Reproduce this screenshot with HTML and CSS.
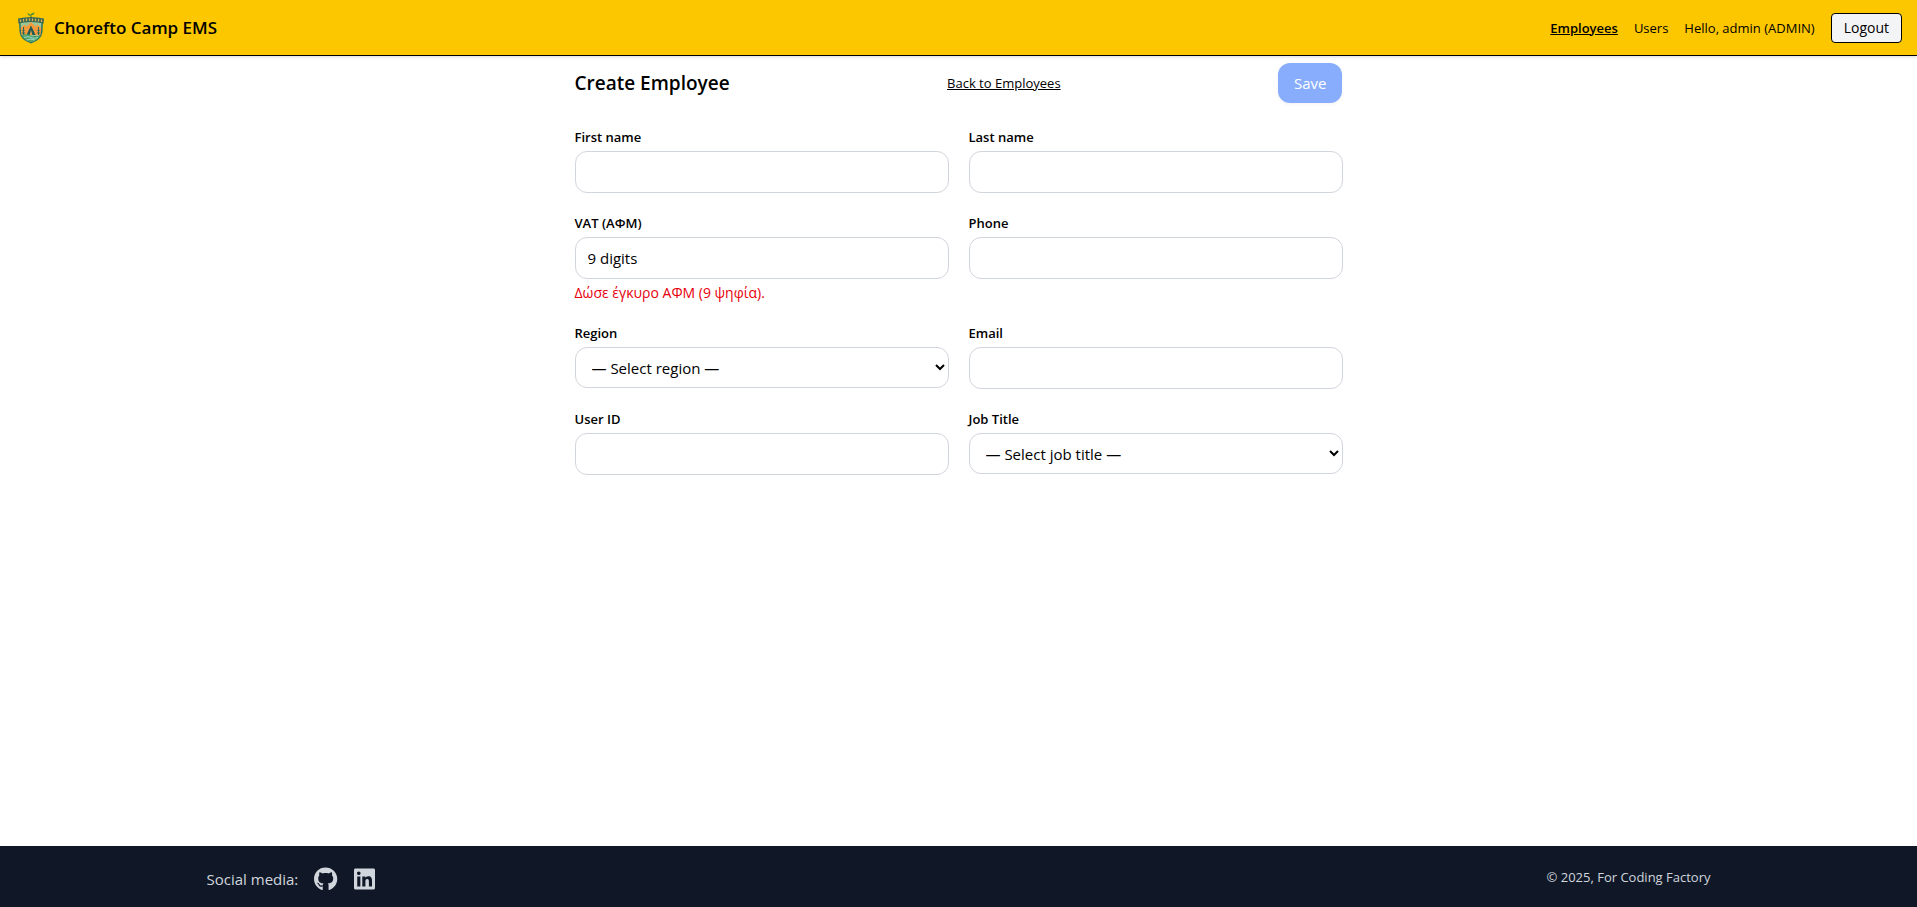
FILE: index.html
```html
<!DOCTYPE html>
<html lang="en">
<head>
<meta charset="utf-8">
<meta name="viewport" content="width=device-width, initial-scale=1">
<title>Chorefto Camp EMS</title>
<link rel="stylesheet" href="styles.css">
</head>
<body>
<header class="topbar">
  <a class="brand" href="#">
    <svg class="brand-logo" viewBox="0 0 30 32" aria-hidden="true">
      <path d="M3 9 L3.500 20 Q4.500 28 15 31.500 Q25.500 28 26.500 20 L27 9 Z" fill="#2b7364"/>
      <path d="M4.500 10 L5 19 Q5 22 7 24 H23 Q25 21 25.500 10 Z" fill="#9cc79a"/>
      <path d="M4.700 16 L8.500 12.500 L10.500 14.500 L15 10 L19.500 14.500 L21.500 12.500 L25.300 16 L24.500 23 H5.500 Z" fill="#f39a3d"/>
      <path d="M15 13.500 L10.500 23 H19.500 Z" fill="#1f5a50"/>
      <path d="M15 18 L13.600 23 H16.400 Z" fill="#e9a04a"/>
      <path d="M7.500 15 V23 M22.500 15 V23 M6.300 18.500 H8.700 M21.300 18.500 H23.700 M6 21 H9 M21 21 H24" stroke="#2b6a55" stroke-width="1"/>
      <path d="M5.500 23 Q10 21.500 15 23.500 T24.500 23 Q22.500 28 15 30.300 Q7.500 28 5.500 23 Z" fill="#58a566"/>
      <path d="M8 25.500 Q12 24 15 25.500 T22 25.500 M10.500 28 Q14.500 26.500 19 28" stroke="#93d3c6" stroke-width="1.200" fill="none"/>
      <path d="M2 6.500 Q15 3.500 28 6.500 L27.600 11.500 Q15 8.500 2.400 11.500 Z" fill="#3d6b50"/>
      <path d="M4.500 7.500 V10 M7.500 7 V9.500 M10.500 6.500 V9 M13.500 6.500 V8.800 M16.500 6.500 V9 M19.500 6.700 V9.200 M22.500 7 V9.600 M25.500 7.500 V10" stroke="#dfae56" stroke-width="1.200"/>
      <path d="M15 5.500 Q14.500 3 16 1.500" stroke="#2f7038" fill="none"/>
      <path d="M15 3.800 Q12 4 11.300 1.500 Q14.300 1.200 15 3.800 Z M15.300 3 Q16 .2 18.500 .5 Q18.300 3 15.300 3 Z" fill="#3d8a3e"/>
    </svg>
    <span>Chorefto Camp EMS</span>
  </a>
  <nav class="topnav">
    <a class="active" href="#">Employees</a>
    <a href="#">Users</a>
    <span>Hello, admin (ADMIN)</span>
    <button class="logout" type="button">Logout</button>
  </nav>
</header>

<main class="page">
  <form class="employee-form">
    <div class="form-head">
      <h1>Create Employee</h1>
      <a href="#">Back to Employees</a>
      <button class="save" type="submit" disabled>Save</button>
    </div>
    <div class="fields">
      <div class="field"><label for="first">First name</label><input id="first" type="text"></div>
      <div class="field"><label for="last">Last name</label><input id="last" type="text"></div>
      <div class="field">
        <label for="vat">VAT (ΑΦΜ)</label><input id="vat" type="text" value="9 digits" aria-describedby="vat-error">
        <p class="error" id="vat-error" lang="el">Δώσε έγκυρο ΑΦΜ (9 ψηφία).</p>
      </div>
      <div class="field"><label for="phone">Phone</label><input id="phone" type="tel"></div>
      <div class="field"><label for="region">Region</label><select id="region"><option>— Select region —</option></select></div>
      <div class="field"><label for="email">Email</label><input id="email" type="email"></div>
      <div class="field"><label for="user">User ID</label><input id="user" type="text"></div>
      <div class="field"><label for="job">Job Title</label><select id="job"><option>— Select job title —</option></select></div>
    </div>
  </form>
</main>

<footer class="footer">
  <div class="footer-inner">
    <div class="social">
      <span>Social media:</span>
      <a href="#" aria-label="GitHub"><svg viewBox="0 0 496 512"><path d="M165.900 397.400c0 2-2.300 3.600-5.200 3.600-3.300.3-5.600-1.300-5.600-3.600 0-2 2.300-3.600 5.200-3.600 3-.3 5.600 1.300 5.600 3.600zm-31.100-4.500c-.7 2 1.300 4.300 4.300 4.900 2.600 1 5.600 0 6.200-2s-1.300-4.300-4.300-5.200c-2.600-.7-5.500.3-6.200 2.300zm44.200-1.700c-2.900.7-4.900 2.600-4.600 4.900.3 2 2.900 3.300 5.900 2.600 2.900-.7 4.900-2.600 4.600-4.600-.3-1.900-3-3.200-5.900-2.900zM244.800 8C106.100 8 0 113.300 0 252c0 110.900 69.800 205.800 169.500 239.200 12.800 2.300 17.300-5.600 17.300-12.100 0-6.200-.3-40.400-.3-61.400 0 0-70 15-84.700-29.800 0 0-11.400-29.100-27.800-36.600 0 0-22.900-15.700 1.600-15.400 0 0 24.900 2 38.600 25.800 21.900 38.600 58.600 27.500 72.900 20.900 2.300-16 8.800-27.100 16-33.700-55.900-6.200-112.300-14.300-112.300-110.500 0-27.500 7.600-41.300 23.600-58.900-2.600-6.500-11.100-33.300 2.600-67.900 20.900-6.500 69 27 69 27 20-5.600 41.500-8.500 62.800-8.500s42.800 2.900 62.800 8.500c0 0 48.100-33.600 69-27 13.700 34.700 5.200 61.400 2.600 67.900 16 17.700 25.800 31.500 25.800 58.900 0 96.500-58.900 104.200-114.800 110.500 9.200 7.900 17 22.900 17 46.400 0 33.700-.3 75.400-.3 83.600 0 6.500 4.600 14.400 17.300 12.100C428.200 457.800 496 362.900 496 252 496 113.300 383.500 8 244.800 8z"/></svg></a>
      <a href="#" aria-label="LinkedIn"><svg viewBox="0 0 448 512"><path d="M416 32H31.900C14.300 32 0 46.500 0 64.300v383.400C0 465.500 14.300 480 31.900 480H416c17.600 0 32-14.500 32-32.300V64.300c0-17.800-14.400-32.300-32-32.300zM135.400 416H69V202.200h66.500V416zm-33.200-243c-21.300 0-38.500-17.300-38.500-38.500S80.900 96 102.200 96c21.200 0 38.500 17.300 38.500 38.500 0 21.300-17.200 38.500-38.500 38.500zm282.100 243h-66.400V312c0-24.800-.5-56.700-34.500-56.700-34.600 0-39.900 27-39.900 54.900V416h-66.400V202.200h63.700v29.200h.9c8.900-16.800 30.600-34.500 62.900-34.500 67.200 0 79.700 44.300 79.700 101.900V416z"/></svg></a>
    </div>
    <p class="copyright">© 2025, For Coding Factory</p>
  </div>
</footer>
</body>
</html>
```

FILE: styles.css
```css
*, *::before, *::after { box-sizing: border-box; }

body {
  margin: 0;
  min-height: 100vh;
  display: flex;
  flex-direction: column;
  background: #fff;
  color: #000;
  font-family: "Segoe UI", "Open Sans", "Noto Sans", sans-serif;
  font-size: 15px;
  line-height: 24px;
}

h1, p { margin: 0; }
a { color: inherit; }
button, input, select { font: inherit; color: inherit; }

.topbar {
  display: flex;
  align-items: center;
  justify-content: space-between;
  height: 56px;
  padding: 0 15px 0 16px;
  background: #fdc700;
  border-bottom: 1px solid #000;
  box-shadow: 0 1px 3px rgba(0, 0, 0, .15);
}

.brand {
  display: flex;
  align-items: center;
  gap: 8px;
  font-size: 17px;
  font-weight: 600;
  text-decoration: none;
}
.brand-logo { width: 30px; height: 32px; }

.topnav {
  display: flex;
  align-items: center;
  gap: 16px;
  font-size: 13px;
  line-height: 20px;
}
.topnav a { text-decoration: none; }
.topnav .active { font-weight: 600; text-decoration: underline; }

.logout {
  padding: 4px 12px;
  background: #f3f4f6;
  border: 1px solid #000;
  border-radius: 4px;
  font-size: 14px;
}

.page { flex: 1; padding: 7px 16px; }
.employee-form { max-width: 768px; margin: 0 auto; }

.form-head {
  display: flex;
  align-items: center;
  justify-content: space-between;
  margin-bottom: 24px;
}
.form-head h1 { font-size: 19px; line-height: 28px; font-weight: 600; }
.form-head a { font-size: 13px; line-height: 20px; }

.save {
  padding: 8px 16px;
  border: 0;
  border-radius: 12px;
  background: #155dfc;
  color: #fff;
  box-shadow: 0 1px 3px rgba(0, 0, 0, .1);
  opacity: .5;
}

.fields {
  display: grid;
  grid-template-columns: 1fr 1fr;
  gap: 20px;
}
.field label {
  display: block;
  margin-bottom: 4px;
  font-size: 13px;
  line-height: 20px;
  font-weight: 600;
}
.field input, .field select {
  display: block;
  width: 100%;
  height: 42px;
  padding: 8px 12px;
  background: #fff;
  border: 1px solid #d1d5dc;
  border-radius: 12px;
}
.field select { height: 41px; }
.error {
  margin-top: 4px;
  color: #e7000b;
  font-size: 14px;
  line-height: 20px;
}

.footer { background: #101828; color: #d1d5dc; }
.footer-inner {
  display: flex;
  align-items: center;
  justify-content: space-between;
  max-width: 1536px;
  min-height: 61px;
  margin: 0 auto;
  padding: 0 16px;
}
.social { display: flex; align-items: center; gap: 16px; padding-top: 4px; }
.social a { display: flex; }
.social svg { height: 24px; fill: currentColor; }
.copyright { font-size: 13px; line-height: 20px; }
```
